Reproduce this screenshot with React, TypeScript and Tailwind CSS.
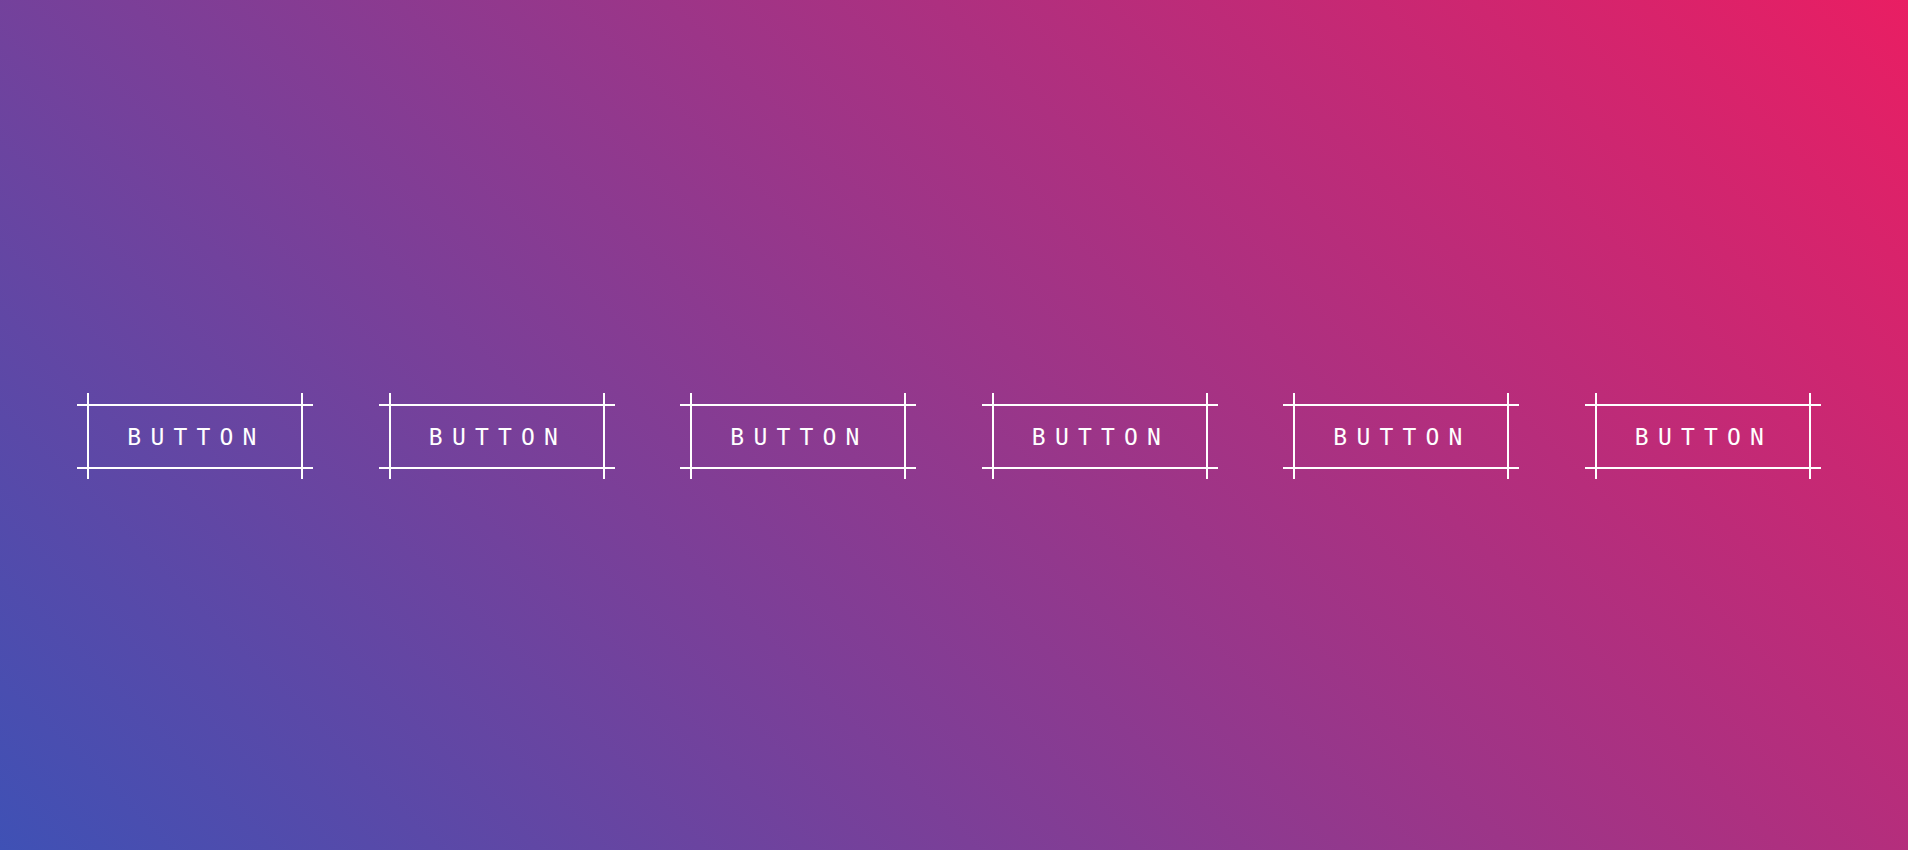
const labels = ['BUTTON', 'BUTTON', 'BUTTON', 'BUTTON', 'BUTTON', 'BUTTON']

const FrameButton = ({ label }: { label: string }) => {
  return (
    <button className="relative w-[216px] h-[65px] shrink-0 flex items-center justify-center pt-[2px] pl-[3px] text-white text-[23px] tracking-[9.2px] font-['DejaVu_Sans_Mono',monospace] leading-none">
      <span className="absolute top-0 -left-[10px] -right-[10px] h-[2px] bg-white"></span>
      <span className="absolute bottom-0 -left-[10px] -right-[10px] h-[2px] bg-white"></span>
      <span className="absolute left-0 -top-[11px] -bottom-[10px] w-[2px] bg-white"></span>
      <span className="absolute right-0 -top-[11px] -bottom-[10px] w-[2px] bg-white"></span>
      {label}
    </button>
  )
}

export default function App() {
  return (
    <div className="w-full h-[850px] overflow-hidden bg-[linear-gradient(45deg,#3f51b5,#e91e63)]">
      <div className="flex gap-[85.5px] pl-[87px] pt-[404px]">
        {labels.map((l, i) => (
          <FrameButton key={i} label={l} />
        ))}
      </div>
    </div>
  )
}
